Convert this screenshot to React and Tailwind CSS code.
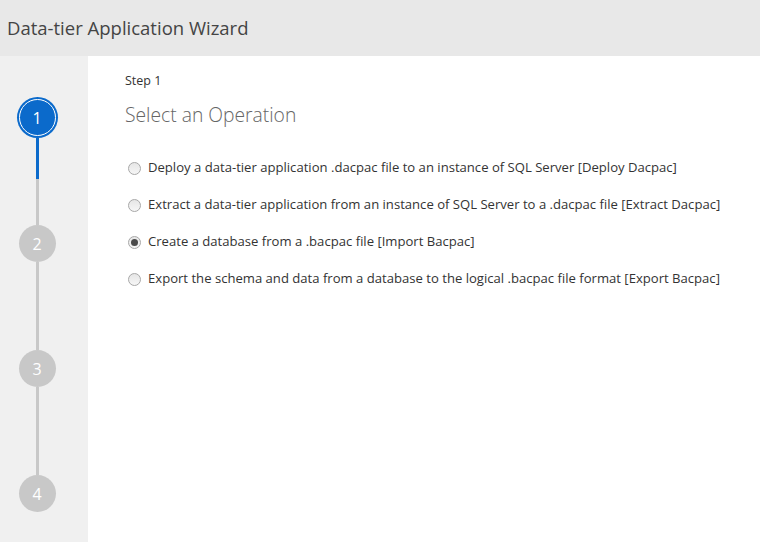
import React from "react";

const options = [
  { label: "Deploy a data-tier application .dacpac file to an instance of SQL Server [Deploy Dacpac]", checked: false },
  { label: "Extract a data-tier application from an instance of SQL Server to a .dacpac file [Extract Dacpac]", checked: false },
  { label: "Create a database from a .bacpac file [Import Bacpac]", checked: true },
  { label: "Export the schema and data from a database to the logical .bacpac file format [Export Bacpac]", checked: false },
];

function Radio({ checked }) {
  return (
    <span className="w-[13px] h-[13px] rounded-full border border-[#a8a8a8] bg-gradient-to-b from-[#e6e6e6] to-[#f6f6f6] flex items-center justify-center shrink-0">
      {checked && <span className="w-[7px] h-[7px] rounded-full bg-[#4a4a4a]" />}
    </span>
  );
}

export default function App() {
  return (
    <div className="w-[760px] h-[542px] flex flex-col bg-white overflow-hidden" style={{ fontFamily: '"Open Sans", "Noto Sans", sans-serif' }}>
      <div className="h-[56px] bg-[#e8e8e8] flex items-center pl-[7px] shrink-0">
        <span className="text-[18.5px] text-[#444]">Data-tier Application Wizard</span>
      </div>
      <div className="flex flex-1">
        <div className="w-[88px] bg-[#f0f0f0] flex flex-col items-center pt-[41px] pr-[14px]">
          <div className="w-[41px] h-[41px] rounded-full bg-[#0b6acb] flex items-center justify-center">
            <div className="w-[37px] h-[37px] rounded-full border border-white flex items-center justify-center text-white text-[16px]">1</div>
          </div>
          <div className="w-[3px] h-[41px] bg-[#0b6acb]" />
          <div className="w-[3px] h-[46px] bg-[#c8c8c8]" />
          <div className="w-[37px] h-[37px] rounded-full bg-[#c8c8c8] flex items-center justify-center text-white text-[16px]">2</div>
          <div className="w-[3px] h-[88px] bg-[#c8c8c8]" />
          <div className="w-[37px] h-[37px] rounded-full bg-[#c8c8c8] flex items-center justify-center text-white text-[16px]">3</div>
          <div className="w-[3px] h-[88px] bg-[#c8c8c8]" />
          <div className="w-[37px] h-[37px] rounded-full bg-[#c8c8c8] flex items-center justify-center text-white text-[16px]">4</div>
        </div>
        <div className="flex-1 pl-[37px] pt-[16px]">
          <div className="text-[12.5px] text-[#333] leading-[18px]">Step 1</div>
          <div className="text-[19.3px] font-light text-[#666] leading-[26px] mt-[12px]">Select an Operation</div>
          <div className="flex flex-col gap-[19px] mt-[31px] pl-[3px]">
            {options.map((o, i) => (
              <div key={i} className="flex items-center gap-[7px] h-[18px]">
                <Radio checked={o.checked} />
                <span className="text-[13.1px] text-[#333] whitespace-nowrap">{o.label}</span>
              </div>
            ))}
          </div>
        </div>
      </div>
    </div>
  );
}
